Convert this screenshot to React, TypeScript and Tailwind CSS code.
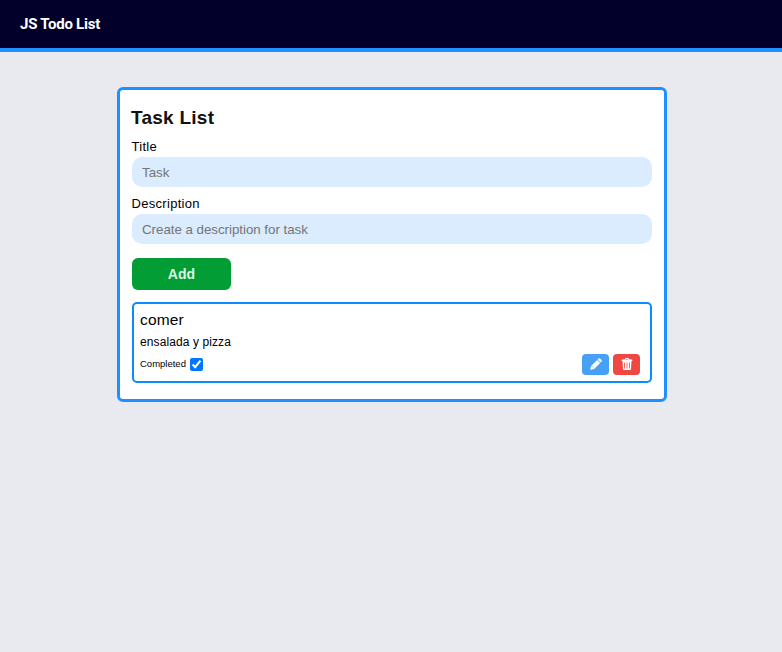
import { useState } from "react";

function Field({ label, placeholder }: { label: string; placeholder: string }) {
  return (
    <label className="block">
      <span className="-ml-[0.5px] block h-5 text-[13px] leading-5 tracking-[0.3px] text-black">{label}</span>
      <input
        placeholder={placeholder}
        className="block h-[30px] w-full rounded-[10px] bg-[#daecfe] px-2.5 text-[13.333px] tracking-[-0.03px] outline-none placeholder:text-[#757575]"
      />
    </label>
  );
}

function PencilIcon() {
  return (
    <svg viewBox="0 0 12 12" className="mb-px size-3" fill="currentColor">
      <path d="M7.1 1.9 10.1 4.9 4.1 10.9 .9 11.8Q.1 12 .3 11.1L1.1 7.9Z" />
      <path d="M7.6 1.4 8.5.5Q9.2-.1 9.9.5L11.5 2.1Q12.1 2.8 11.5 3.5L10.6 4.4Z" />
      <path d="M2.3 8.5 3.5 9.7" stroke="#46a0f5" strokeWidth=".5" />
    </svg>
  );
}

function TrashIcon() {
  return (
    <svg viewBox="0 0 12 12" className="mb-px size-3" fill="currentColor">
      <path fillRule="evenodd" d="M3.5 1.6 4.2.4Q4.4 0 4.9 0H7.1Q7.6 0 7.8.4L8.5 1.6H11Q11.4 1.6 11.4 2V2.6Q11.4 3 11 3H1Q.6 3 .6 2.6V2Q.6 1.6 1 1.6ZM4.7 1.6H7.3L7 1H5Z" />
      <path fillRule="evenodd" d="M1.5 3H10.5L10 11Q9.9 12 9 12H3Q2.1 12 2 11ZM3.2 4.5V10.5H4V4.5ZM5.6 4.5V10.5H6.4V4.5ZM8 4.5V10.5H8.8V4.5Z" />
    </svg>
  );
}

export default function App() {
  const [done, setDone] = useState(true);
  return (
    <div className="min-h-screen bg-[#e9eaef] font-['Liberation_Sans',Arial,sans-serif] text-black">
      <header className="flex h-[52px] items-center border-b-4 border-[#1e90ff] bg-[#02002a] px-5">
        <h1 className="font-['Roboto',sans-serif] text-[15px] leading-5 font-bold tracking-[-0.25px] text-white">JS Todo List</h1>
      </header>
      <main className="mt-[35px] ml-[117px] h-[315px] w-[550px] rounded-md border-[3px] border-[#1e90ff] bg-white px-3 pt-4">
        <h2 className="mb-[7px] -ml-px h-6 text-[19px] leading-6 font-bold tracking-[0.25px] text-[#111]">Task List</h2>
        <div className="flex flex-col gap-[7px]">
          <Field label="Title" placeholder="Task" />
          <Field label="Description" placeholder="Create a description for task" />
        </div>
        <button className="mt-3.5 block h-8 w-[99px] rounded-md bg-[#029e35] text-sm font-bold tracking-[0.1px] text-[#dcf5e3]">Add</button>
        <article className="mt-3 h-[81px] rounded-[5px] border-2 border-[#0a8cff] px-1.5 pt-1.5">
          <h3 className="h-5 text-[15.5px] leading-5 tracking-[0.15px]">comer</h3>
          <p className="mt-0.5 h-5 text-xs leading-5 tracking-[0.1px]">ensalada y pizza</p>
          <div className="mt-0.5 flex h-[21px] items-center pr-1">
            <label className="flex items-center gap-1 text-[9.5px]">
              Completed
              <input type="checkbox" checked={done} onChange={() => setDone(!done)} className="size-[13px]" />
            </label>
            <div className="ml-auto flex gap-1">
              <button aria-label="Edit" className="flex h-[21px] w-[27px] items-center justify-center rounded bg-[#46a0f5] text-white">
                <PencilIcon />
              </button>
              <button aria-label="Delete" className="flex h-[21px] w-[27px] items-center justify-center rounded bg-[#ef4742] text-white">
                <TrashIcon />
              </button>
            </div>
          </div>
        </article>
      </main>
    </div>
  );
}
